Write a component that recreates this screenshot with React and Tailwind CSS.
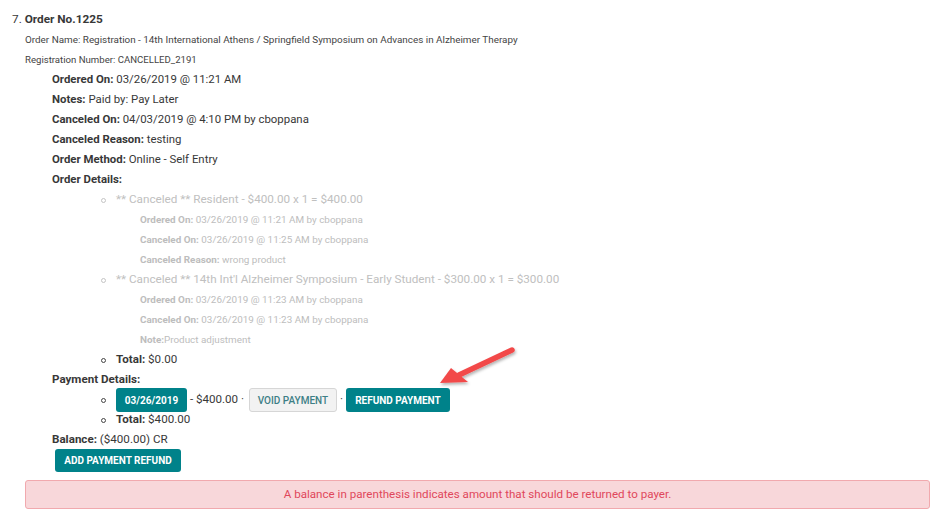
import React from 'react';

const teal = 'bg-[#00828a]';

function Bullet({ light }) {
  return (
    <span
      className={`mr-[10px] inline-block h-[5px] w-[5px] shrink-0 rounded-full border ${
        light ? 'border-[#c4c4c4]' : 'border-[#444]'
      }`}
    />
  );
}

function Line({ label, value, className = '' }) {
  return (
    <div className={`flex h-[20px] items-center pl-[52px] ${className}`}>
      <span className="font-bold">{label}</span>
      <span>&nbsp;{value}</span>
    </div>
  );
}

function CanceledItem({ title, details }) {
  return (
    <>
      <div className="flex h-[20px] items-center pl-[101px] text-[11.7px] text-[#c0c0c0]">
        <Bullet light />
        <span>{title}</span>
      </div>
      {details.map((d, i) => (
        <div key={i} className="flex h-[20px] items-center pl-[140px] text-[9.9px] text-[#bdbdbd]">
          <span className="font-bold">{d[0]}</span>
          <span>{d[1]}</span>
        </div>
      ))}
    </>
  );
}

export default function App() {
  return (
    <div
      className="relative min-h-[517px] w-[935px] bg-white pt-[10px] text-[11.4px] text-[#383838]"
      style={{ fontFamily: 'Roboto, "Noto Sans", sans-serif' }}
    >
      <div className="flex h-[20px] items-center pl-[12px] text-[11.8px]">
        <span>7.&nbsp;</span>
        <span className="font-bold">Order No.1225</span>
      </div>
      <div className="flex h-[20px] items-center pl-[25px] text-[9.9px] text-[#444]">
        Order Name: Registration - 14th International Athens / Springfield Symposium on Advances in Alzheimer Therapy
      </div>
      <div className="flex h-[20px] items-center pl-[25px] text-[9.6px] text-[#444]">
        Registration Number: CANCELLED_2191
      </div>

      <Line label="Ordered On:" value="03/26/2019 @ 11:21 AM" />
      <Line label="Notes:" value="Paid by: Pay Later" />
      <Line label="Canceled On:" value="04/03/2019 @ 4:10 PM by cboppana" />
      <Line label="Canceled Reason:" value="testing" />
      <Line label="Order Method:" value="Online - Self Entry" />
      <div className="flex h-[20px] items-center pl-[52px] font-bold">Order Details:</div>

      <CanceledItem
        title="** Canceled ** Resident - $400.00 x 1 = $400.00"
        details={[
          ['Ordered On:', '\u00a003/26/2019 @ 11:21 AM by cboppana'],
          ['Canceled On:', '\u00a003/26/2019 @ 11:25 AM by cboppana'],
          ['Canceled Reason:', '\u00a0wrong product'],
        ]}
      />
      <CanceledItem
        title="** Canceled ** 14th Int'l Alzheimer Symposium - Early Student - $300.00 x 1 = $300.00"
        details={[
          ['Ordered On:', '\u00a003/26/2019 @ 11:23 AM by cboppana'],
          ['Canceled On:', '\u00a003/26/2019 @ 11:23 AM by cboppana'],
          ['Note:', 'Product adjustment'],
        ]}
      />

      <div className="flex h-[20px] items-center pl-[101px] text-[11.6px]">
        <Bullet />
        <span className="font-bold">Total:</span>
        <span>&nbsp;$0.00</span>
      </div>

      <div className="flex h-[20px] items-center pl-[52px] text-[11.6px] font-bold">Payment Details:</div>
      <div className="flex h-[20px] items-center pl-[101px] text-[11.6px]">
        <Bullet />
        <button className={`${teal} h-[24px] w-[71px] rounded-[3px] text-[10px] font-bold text-white`}>
          03/26/2019
        </button>
        <span>&nbsp;- $400.00 ·&nbsp;</span>
        <button className="ml-[2px] h-[24px] w-[88px] rounded-[3px] border border-[#d6d6d6] bg-[#f2f2f2] text-[10px] font-medium text-[#3d7f86]">
          VOID PAYMENT
        </button>
        <span className="px-[3px]">·</span>
        <button className={`${teal} h-[24px] w-[104px] rounded-[3px] text-[10px] font-bold text-white`}>
          REFUND PAYMENT
        </button>
      </div>
      <div className="flex h-[20px] items-center pl-[101px] text-[11.6px]">
        <Bullet />
        <span className="font-bold">Total:</span>
        <span>&nbsp;$400.00</span>
      </div>
      <Line label="Balance:" value="($400.00) CR" className="text-[11.6px]" />
      <div className="-mt-[1px] pl-[55px]">
        <button className={`${teal} h-[23px] w-[126px] rounded-[3px] text-[10px] font-bold text-white`}>
          ADD PAYMENT REFUND
        </button>
      </div>

      <div className="ml-[25px] mt-[8px] flex h-[29px] w-[905px] items-center justify-center rounded-[3px] border border-[#f1a9ae] bg-[#f8d7da] text-[11.6px] text-[#e0475b]">
        A balance in parenthesis indicates amount that should be returned to payer.
      </div>

      <svg
        className="absolute left-[435px] top-[344px]"
        width="88"
        height="48"
        viewBox="0 0 88 48"
      >
        <defs>
          <filter id="sh" x="-20%" y="-20%" width="140%" height="160%">
            <feDropShadow dx="1" dy="2" stdDeviation="1.5" floodColor="#000" floodOpacity="0.3" />
          </filter>
        </defs>
        <g filter="url(#sh)">
          <line x1="77" y1="6" x2="24" y2="31" stroke="#f24a4a" strokeWidth="5.5" strokeLinecap="round" />
          <polygon points="5,39 16,24 33,38" fill="#f24a4a" />
        </g>
      </svg>
    </div>
  );
}
